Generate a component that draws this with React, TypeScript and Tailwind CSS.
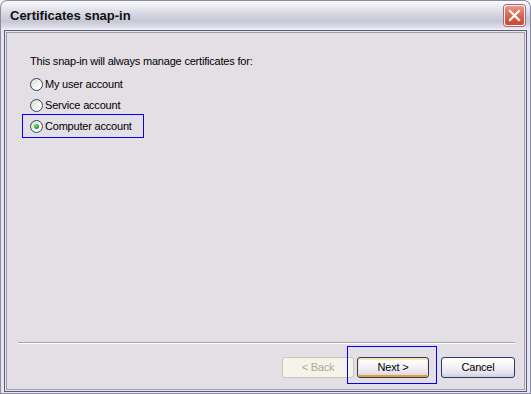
import {ReactElement} from 'react';

function Radio(props:{checked?:boolean}) : ReactElement {
  return <span className="relative w-[13px] h-[13px] shrink-0 rounded-full border border-[#2b4a6e] bg-[linear-gradient(135deg,#d9d8d2_0%,#f4f4f0_55%,#ffffff_100%)] flex items-center justify-center">
    {props.checked && <span className="w-[5px] h-[5px] rounded-full bg-[radial-gradient(circle_at_40%_35%,#7fe07f_0%,#23a023_60%,#138a13_100%)]"></span>}
  </span>;
}

function RadioRow(props:{label:string,checked?:boolean,focused?:boolean}) : ReactElement {
  return <div className="relative h-[21px] flex items-center gap-[2px]">
    <Radio checked={props.checked}/>
    <span>{props.label}</span>
    {props.focused && <span className="absolute left-[-8px] top-[-2px] w-[122px] h-[24px] border border-[#0000ff] pointer-events-none"></span>}
  </div>;
}

function WizardButton(props:{label:string,width:string,disabled?:boolean,isDefault?:boolean,marked?:boolean}) : ReactElement {
  if(props.disabled){
    return <button disabled className={props.width+' h-[21px] rounded-[3px] border border-[#c9c7ba] bg-[#f5f4ea] text-[#aca899]'}>{props.label}</button>;
  }
  return <div className="relative">
    <button className={props.width+' h-[21px] rounded-[3px] border border-[#1f3e6c] bg-[linear-gradient(to_bottom,#ffffff_0%,#f6f5f8_40%,#e4e1ea_80%,#d2cedc_100%)] text-black '+(props.isDefault?'shadow-[inset_0_1px_0_1px_#fde5b0,inset_0_-1px_0_1px_#ef9e2c]':'')}>{props.label}</button>
    {props.marked && <span className="absolute left-[-10px] top-[-11px] w-[90px] h-[38px] border border-[#0000ff] pointer-events-none"></span>}
  </div>;
}

export default function App() : ReactElement {
  return <div className="w-[531px] h-[394px] flex flex-col bg-white font-['Liberation_Sans',Arial,sans-serif] text-[11px] text-black tracking-[-0.2px]">
    <div className="h-[30px] shrink-0 rounded-t-[7px] border border-b-0 border-[#8a8aa4] bg-[linear-gradient(to_bottom,#fbfbfd_0%,#e6e6ee_25%,#cfcfdc_55%,#c6c6d6_70%,#dcdce6_88%,#f0f0f5_100%)] flex items-center pl-[9px] pr-[5px]">
      <span className="text-[13px] font-bold tracking-normal text-[#111]">Certificates snap-in</span>
      <span className="ml-auto w-[21px] h-[21px] rounded-[3px] border border-[#f4f4f8] shadow-[0_0_0_1px_#b0667a] bg-[linear-gradient(to_bottom,#ec9a88_0%,#dc6a53_45%,#c9482f_100%)] flex items-center justify-center">
        <svg width="13" height="13" viewBox="0 0 13 13">
          <path d="M2 2 L11 11 M11 2 L2 11" stroke="#ffffff" strokeWidth="2.2" strokeLinecap="square"/>
        </svg>
      </span>
    </div>
    <div className="flex-1 flex bg-[#e8e6ec] border-x border-b border-[#8a8aa4] px-[3px] pb-px">
      <div className="flex-1 flex border border-[#5b5b80] p-px">
        <div className="flex-1 flex flex-col border border-[#9d9db4] bg-[#e3dfe5]">
          <div className="pl-[23px] pt-[22px]">
            <p className="h-[13px] leading-[13px]">This snap-in will always manage certificates for:</p>
            <div className="mt-[6px] flex flex-col">
              <RadioRow label="My user account"/>
              <RadioRow label="Service account"/>
              <RadioRow label="Computer account" checked focused/>
            </div>
          </div>
          <div className="flex-1"></div>
          <div className="ml-[11px] mr-[9px] border-t border-[#a6a5ad] border-b border-b-white"></div>
          <div className="flex justify-end items-center pr-[9px] mt-[13px] mb-[11px]">
            <WizardButton label="< Back" width="w-[72px]" disabled/>
            <div className="w-[3px]"></div>
            <WizardButton label="Next >" width="w-[72px]" isDefault marked/>
            <div className="w-[12px]"></div>
            <WizardButton label="Cancel" width="w-[74px]"/>
          </div>
        </div>
      </div>
    </div>
  </div>;
}
